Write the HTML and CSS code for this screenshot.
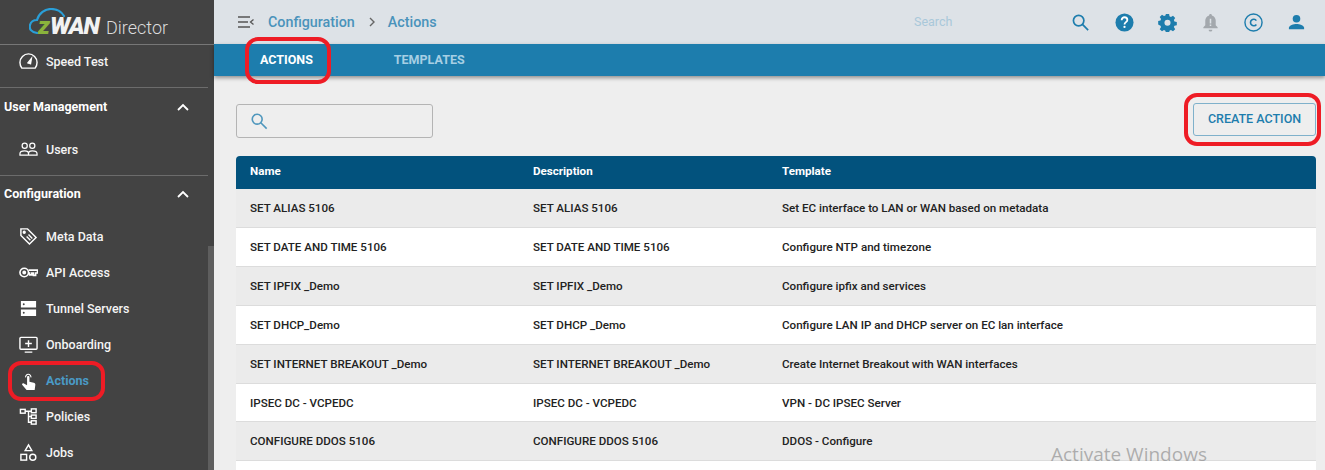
FILE: index.html
```html
<!DOCTYPE html>
<html lang="en">
<head>
<meta charset="UTF-8">
<meta name="viewport" content="width=device-width, initial-scale=1.0">
<title>Actions</title>
<link rel="stylesheet" href="styles.css">
</head>
<body>

<div class="app">
    <!-- Sidebar -->
    <aside class="sidebar">
        <div class="logo">
            <svg class="logo-cloud" width="42" height="30" viewBox="0 0 42 30" fill="none">
                <path d="M8 25C2 24 0 21 1 17C2 13 5 12 8 12C10 5 16 1 22 1C28 1 32 3 35 8" stroke="#2a9fd8" stroke-width="2.200" stroke-linecap="round"/>
            </svg>
            <span class="logo-z">z</span><span class="logo-wan">WAN</span><span class="logo-director">Director</span>
        </div>

        <div class="side-group side-top">
            <a class="side-item">
                <svg class="side-icon" viewBox="0 0 20 20" fill="none" stroke="#fff" stroke-width="1.500"><path d="M3 17h14c1.500-2 2-3.500 2-6a9 9 0 0 0-18 0c0 2.500.5 4 2 6z"/><path d="M9 12l4-5-1 6" fill="#fff"/></svg>
                <span>Speed Test</span>
            </a>
        </div>

        <div class="side-group side-users">
            <div class="side-title"><span>User Management</span>
                <svg class="chevron" viewBox="0 0 12 8" fill="none" stroke="#fff" stroke-width="1.800"><path d="M1 7l5-5 5 5"/></svg>
            </div>
            <a class="side-item">
                <svg class="side-icon" viewBox="0 0 20 20" fill="none" stroke="#fff" stroke-width="1.300"><circle cx="6" cy="6" r="2.700"/><circle cx="14" cy="6" r="2.700"/><path d="M1 16v-1.500c0-2 2.500-3 5-3s4 1 4 3V16zM10 16v-1.500c0-2 1.500-3 4-3s5 1 5 3V16z"/></svg>
                <span>Users</span>
            </a>
        </div>

        <div class="side-group side-config">
            <div class="side-title"><span>Configuration</span>
                <svg class="chevron" viewBox="0 0 12 8" fill="none" stroke="#fff" stroke-width="1.800"><path d="M1 7l5-5 5 5"/></svg>
            </div>
            <div class="side-list">
                <a class="side-item">
                    <svg class="side-icon" viewBox="0 0 20 20" fill="none" stroke="#fff" stroke-width="1.500"><path d="M2 2h7l9 9-7 7-9-9z"/><circle cx="5.500" cy="5.500" r="1" fill="#fff"/><path d="M10 8l4 4M8 10l4 4"/></svg>
                    <span>Meta Data</span>
                </a>
                <a class="side-item">
                    <svg class="side-icon" viewBox="0 0 20 20" fill="none" stroke="#fff" stroke-width="1.700"><circle cx="5.500" cy="10" r="4.500"/><circle cx="5.500" cy="10" r="1.200" fill="#fff"/><path d="M10 7.500h9.500v3h-2v2.500h-2.300v-2.500h-1.700v2H11.200v-2H10"/></svg>
                    <span>API Access</span>
                </a>
                <a class="side-item">
                    <svg class="side-icon" viewBox="0 0 20 20"><path fill="#fff" fill-rule="evenodd" d="M2 2h16v7H2zM5 4.500a1 1 0 1 0 0 2 1 1 0 0 0 0-2zM2 11h16v7H2zM5 13.500a1 1 0 1 0 0 2 1 1 0 0 0 0-2z"/></svg>
                    <span>Tunnel Servers</span>
                </a>
                <a class="side-item">
                    <svg class="side-icon" viewBox="0 0 20 20" fill="none" stroke="#fff" stroke-width="1.500"><rect x="1" y="2.500" width="18" height="12.500" rx="1"/><path d="M6 18h8M10 5.500v7M6.500 9h7"/></svg>
                    <span>Onboarding</span>
                </a>
                <a class="side-item active">
                    <svg class="side-icon" viewBox="0 0 20 20"><path fill="#fff" d="M8.500 6.500c0-1.500 2.500-1.500 2.500 0v4.700l4.500 1.100c1.200.3 1.800 1.100 1.700 2.200L16.500 20H8L3.500 14.800c-.9-1.200.5-2.500 1.700-1.700l3.300 2z"/><path fill="none" stroke="#fff" stroke-width="1.200" d="M7 6.800a2.800 2.800 0 1 1 5.500 0"/></svg>
                    <span>Actions</span>
                </a>
                <a class="side-item">
                    <svg class="side-icon" viewBox="0 0 20 20" fill="none" stroke="#fff" stroke-width="1.500"><rect x="1.500" y="2.500" width="5" height="4"/><rect x="13" y="2" width="5" height="4"/><rect x="13" y="8.500" width="5" height="3.500"/><rect x="13" y="14.500" width="5" height="3.500"/><path d="M6.500 4.500H13M10 4.500V16h3M10 10h3"/></svg>
                    <span>Policies</span>
                </a>
                <a class="side-item">
                    <svg class="side-icon" viewBox="0 0 20 20" fill="none" stroke="#fff" stroke-width="1.500"><path d="M10 2l3.500 6h-7z"/><rect x="2" y="12" width="6" height="6"/><circle cx="14.500" cy="15" r="3.200"/></svg>
                    <span>Jobs</span>
                </a>
            </div>
        </div>
        <div class="side-scroll"></div>
    </aside>

    <div class="main">
        <!-- Top bar -->
        <header class="topbar">
            <svg class="menu-icon" viewBox="0 0 16 12" fill="none" stroke="#555" stroke-width="1.300"><path d="M0 1h12M0 6h10M0 11h12M15.500 3.500L12.500 6l3 2.500"/></svg>
            <span class="crumb">Configuration</span>
            <svg class="crumb-sep" viewBox="0 0 6 10" fill="none" stroke="#666" stroke-width="1.400"><path d="M1 1l4 4-4 4"/></svg>
            <span class="crumb">Actions</span>
            <span class="top-search">Search</span>
            <div class="top-icons">
                <svg viewBox="0 0 20 20" fill="none" stroke="#1d7dad" stroke-width="1.800"><circle cx="7" cy="8" r="5.500"/><path d="M11 12l6 6"/></svg>
                <svg viewBox="0 0 20 20"><circle cx="10" cy="10" r="9.500" fill="#1d7dad"/><path d="M7 7.500C7 5.500 8.500 4.500 10 4.500s3 1 3 2.800c0 2.200-3 2.400-3 4.700" fill="none" stroke="#fff" stroke-width="1.900"/><circle cx="10" cy="14.700" r="1.200" fill="#fff"/></svg>
                <svg viewBox="0 0 20 20"><path fill="#1d7dad" fill-rule="evenodd" d="M8.300 1h3.400l.4 2.500 1.500.7 2.200-1.300 2.300 2.400-1.400 2.100.6 1.600 2.500.5v3.300l-2.500.5-.6 1.500 1.400 2.200-2.300 2.300-2.200-1.400-1.500.7-.4 2.400H8.300l-.5-2.400-1.500-.7-2.100 1.400-2.400-2.300 1.400-2.200-.6-1.500L.2 12V8.500l2.400-.5.600-1.600-1.400-2.100 2.400-2.400 2.100 1.300 1.500-.7zM10 7a3.200 3.200 0 1 0 0 6.400A3.200 3.200 0 0 0 10 7z"/></svg>
                <svg viewBox="0 0 20 20"><path fill="#a3a8ad" d="M10 1c1 0 1.500.7 1.500 1.500C14 3.300 15.500 5.500 15.500 8v5l2 2v1h-15v-1l2-2V8c0-2.500 1.500-4.700 4-5.500C8.500 1.700 9 1 10 1zM8 17.500h4a2 2 0 0 1-4 0z"/><path fill="#dde2e7" d="M9.200 6h1.600v5H9.200zM9.200 12h1.600v1.600H9.200z"/></svg>
                <svg viewBox="0 0 20 20" fill="none" stroke="#1d7dad"><circle cx="10" cy="10" r="9" stroke-width="1.500"/><path d="M13 8a3.400 3.400 0 1 0 0 4" stroke-width="1.700"/></svg>
                <svg viewBox="0 0 20 20"><circle cx="10" cy="6" r="4" fill="#1d7dad"/><path fill="#1d7dad" d="M2 17v-1.500C2 13 7 11.500 10 11.500s8 1.500 8 4V17z"/></svg>
            </div>
        </header>

        <!-- Tabs -->
        <nav class="tabbar">
            <span class="tab active">ACTIONS</span>
            <span class="tab">TEMPLATES</span>
        </nav>

        <div class="content">
            <div class="toolbar">
                <div class="search-box">
                    <svg viewBox="0 0 20 20" fill="none" stroke="#4f97bd" stroke-width="1.800"><circle cx="8" cy="8" r="5.500"/><path d="M12 12l6.500 6.500"/></svg>
                </div>
                <button class="create-button">CREATE ACTION</button>
            </div>

            <table class="actions-table">
                <thead>
                    <tr><th class="col-name">Name</th><th class="col-desc">Description</th><th>Template</th></tr>
                </thead>
                <tbody>
                    <tr><td>SET ALIAS 5106</td><td>SET ALIAS 5106</td><td>Set EC interface to LAN or WAN based on metadata</td></tr>
                    <tr><td>SET DATE AND TIME 5106</td><td>SET DATE AND TIME 5106</td><td>Configure NTP and timezone</td></tr>
                    <tr><td>SET IPFIX _Demo</td><td>SET IPFIX _Demo</td><td>Configure ipfix and services</td></tr>
                    <tr><td>SET DHCP_Demo</td><td>SET DHCP _Demo</td><td>Configure LAN IP and DHCP server on EC lan interface</td></tr>
                    <tr><td>SET INTERNET BREAKOUT _Demo</td><td>SET INTERNET BREAKOUT _Demo</td><td>Create Internet Breakout with WAN interfaces</td></tr>
                    <tr><td>IPSEC DC - VCPEDC</td><td>IPSEC DC - VCPEDC</td><td>VPN - DC IPSEC Server</td></tr>
                    <tr><td>CONFIGURE DDOS 5106</td><td>CONFIGURE DDOS 5106</td><td>DDOS - Configure</td></tr>
                    <tr><td>&nbsp;</td><td></td><td></td></tr>
                </tbody>
            </table>
        </div>
    </div>
</div>

<!-- Red marks drawn over the screenshot -->
<div class="mark mark-tab"></div>
<div class="mark mark-create"></div>
<div class="mark mark-side"></div>
<div class="watermark">Activate Windows</div>

</body>
</html>
```

FILE: styles.css
```css
html, body {
    height: 100%;
}
body {
    margin: 0;
    overflow: hidden;
    font-family: Roboto, "Liberation Sans", sans-serif;
    background-color: #eeeeee;
    position: relative;
}
.app {
    display: flex;
    height: 470px;
    overflow: hidden;
}

/* sidebar */
.sidebar {
    width: 214px;
    flex: none;
    background-color: #434343;
    color: white;
    position: relative;
    overflow: hidden;
}
.logo {
    height: 45px;
    box-sizing: border-box;
    border-bottom: 1px solid #777;
    display: flex;
    align-items: baseline;
    padding: 15px 0 0 38px;
    position: relative;
    line-height: 22px;
}
.logo-cloud {
    position: absolute;
    left: 29px;
    top: 8px;
}
.logo-z {
    font-size: 24px;
    font-weight: 900;
    font-style: italic;
    color: #8ab33c;
}
.logo-wan {
    font-size: 24px;
    font-weight: 900;
    font-style: italic;
    color: #f2f2f2;
    letter-spacing: -1px;
}
.logo-director {
    font-size: 18px;
    font-weight: 300;
    color: #ddd;
    margin-left: 7px;
}
.side-group {
    margin-right: 6px;
}
.side-top {
    height: 43px;
    border-bottom: 1px solid #6c6c6c;
    display: flex;
    align-items: center;
    padding-bottom: 9px;
    box-sizing: border-box;
}
.side-users {
    height: 88px;
    border-bottom: 1px solid #6c6c6c;
    box-sizing: border-box;
}
.side-title {
    height: 37px;
    display: flex;
    align-items: center;
    justify-content: space-between;
    padding: 0 19px 0 4px;
    font-size: 12.500px;
    font-weight: 700;
}
.side-config .side-title {
    height: 35px;
}
.chevron {
    width: 12px;
    height: 8px;
}
.side-users .side-item {
    margin-top: 6px;
}
.side-list {
    margin-top: 7px;
}
.side-item {
    height: 36px;
    display: flex;
    align-items: center;
    gap: 8px;
    padding-left: 19px;
    font-size: 12.500px;
    font-weight: 500;
    color: #f4f4f4;
}
.side-top .side-item {
    width: 100%;
}
.side-item.active {
    color: #4a9ac6;
    font-weight: 700;
}
.side-icon {
    width: 19px;
    height: 19px;
    flex: none;
}
.side-scroll {
    position: absolute;
    right: 0;
    top: 246px;
    bottom: 0;
    width: 6px;
    background-color: #5e5e5e;
}

/* main */
.main {
    flex: 1;
    min-width: 0;
    display: flex;
    flex-direction: column;
}
.topbar {
    height: 44px;
    flex: none;
    background-color: #dde2e7;
    display: flex;
    align-items: center;
    padding-left: 24px;
}
.menu-icon {
    width: 16px;
    height: 12px;
    margin-right: 14px;
}
.crumb {
    font-size: 14.300px;
    font-weight: 500;
    color: #4a93bb;
}
.crumb-sep {
    width: 6px;
    height: 10px;
    margin: 0 13px 0 14px;
}
.top-search {
    position: absolute;
    left: 914px;
    top: 14px;
    font-size: 12.500px;
    color: #a9c8da;
}
.top-icons {
    margin-left: auto;
    display: flex;
    align-items: center;
    gap: 24px;
    padding-right: 19px;
}
.top-icons svg {
    width: 19px;
    height: 19px;
}
.tabbar {
    height: 32px;
    flex: none;
    background-color: #1d7dad;
    display: flex;
    align-items: center;
    box-shadow: 0 2px 4px rgba(0, 0, 0, .4);
    position: relative;
    padding: 0 0 2px 46px;
    box-sizing: border-box;
    gap: 81px;
}
.tab {
    font-size: 12.500px;
    font-weight: 700;
    color: #a6cfe4;
}
.tab.active {
    color: white;
}

/* content */
.content {
    flex: 1;
    padding: 28px 9px 0 22px;
}
.toolbar {
    display: flex;
    justify-content: space-between;
    align-items: flex-start;
    height: 34px;
    margin-bottom: 18px;
}
.search-box {
    width: 197px;
    height: 34px;
    border: 1px solid #b4b4b4;
    border-radius: 3px;
    display: flex;
    align-items: center;
    padding-left: 13px;
    box-sizing: border-box;
}
.search-box svg {
    width: 18px;
    height: 18px;
}
.create-button {
    width: 123px;
    height: 33px;
    margin-top: -1px;
    padding: 0 0 2px;
    background: transparent;
    border: 1px solid #7fb1cb;
    border-radius: 3px;
    color: #1d7dad;
    font-family: inherit;
    font-size: 12.500px;
    font-weight: 500;
}
.actions-table {
    width: 100%;
    table-layout: fixed;
    border-collapse: separate;
    border-spacing: 0;
    font-size: 11.600px;
    color: #222;
}
.actions-table th {
    height: 33px;
    box-sizing: border-box;
    padding: 0 0 3px 14px;
    background-color: #02527d;
    color: white;
    font-weight: 700;
    text-align: left;
}
.actions-table th:first-child {
    border-top-left-radius: 4px;
}
.actions-table th:last-child {
    border-top-right-radius: 4px;
}
.col-name {
    width: 283px;
    box-sizing: border-box;
}
.col-desc {
    width: 249px;
    box-sizing: border-box;
}
.actions-table td {
    height: 38px;
    padding: 0 0 0 14px;
    border-bottom: 1px solid #dcdcdc;
    font-weight: 500;
    background-color: white;
}
.actions-table tbody tr:nth-child(6) td {
    height: 37px;
}
.actions-table tbody tr:nth-child(odd) td {
    background-color: #ebebeb;
}

/* overlays */
.mark {
    position: absolute;
    border: 4px solid #ee1c25;
    box-sizing: border-box;
}
.mark-tab {
    left: 245px;
    top: 37px;
    width: 86px;
    height: 47px;
    border-radius: 13px;
}
.mark-create {
    left: 1184px;
    top: 93px;
    width: 137px;
    height: 53px;
    border-radius: 13px;
}
.mark-side {
    left: 8px;
    top: 361px;
    width: 97px;
    height: 40px;
    border-radius: 13px;
}
.watermark {
    position: absolute;
    left: 1051px;
    top: 441px;
    font-family: "Open Sans", sans-serif;
    font-size: 19px;
    color: rgba(110, 110, 110, .5);
}
```
